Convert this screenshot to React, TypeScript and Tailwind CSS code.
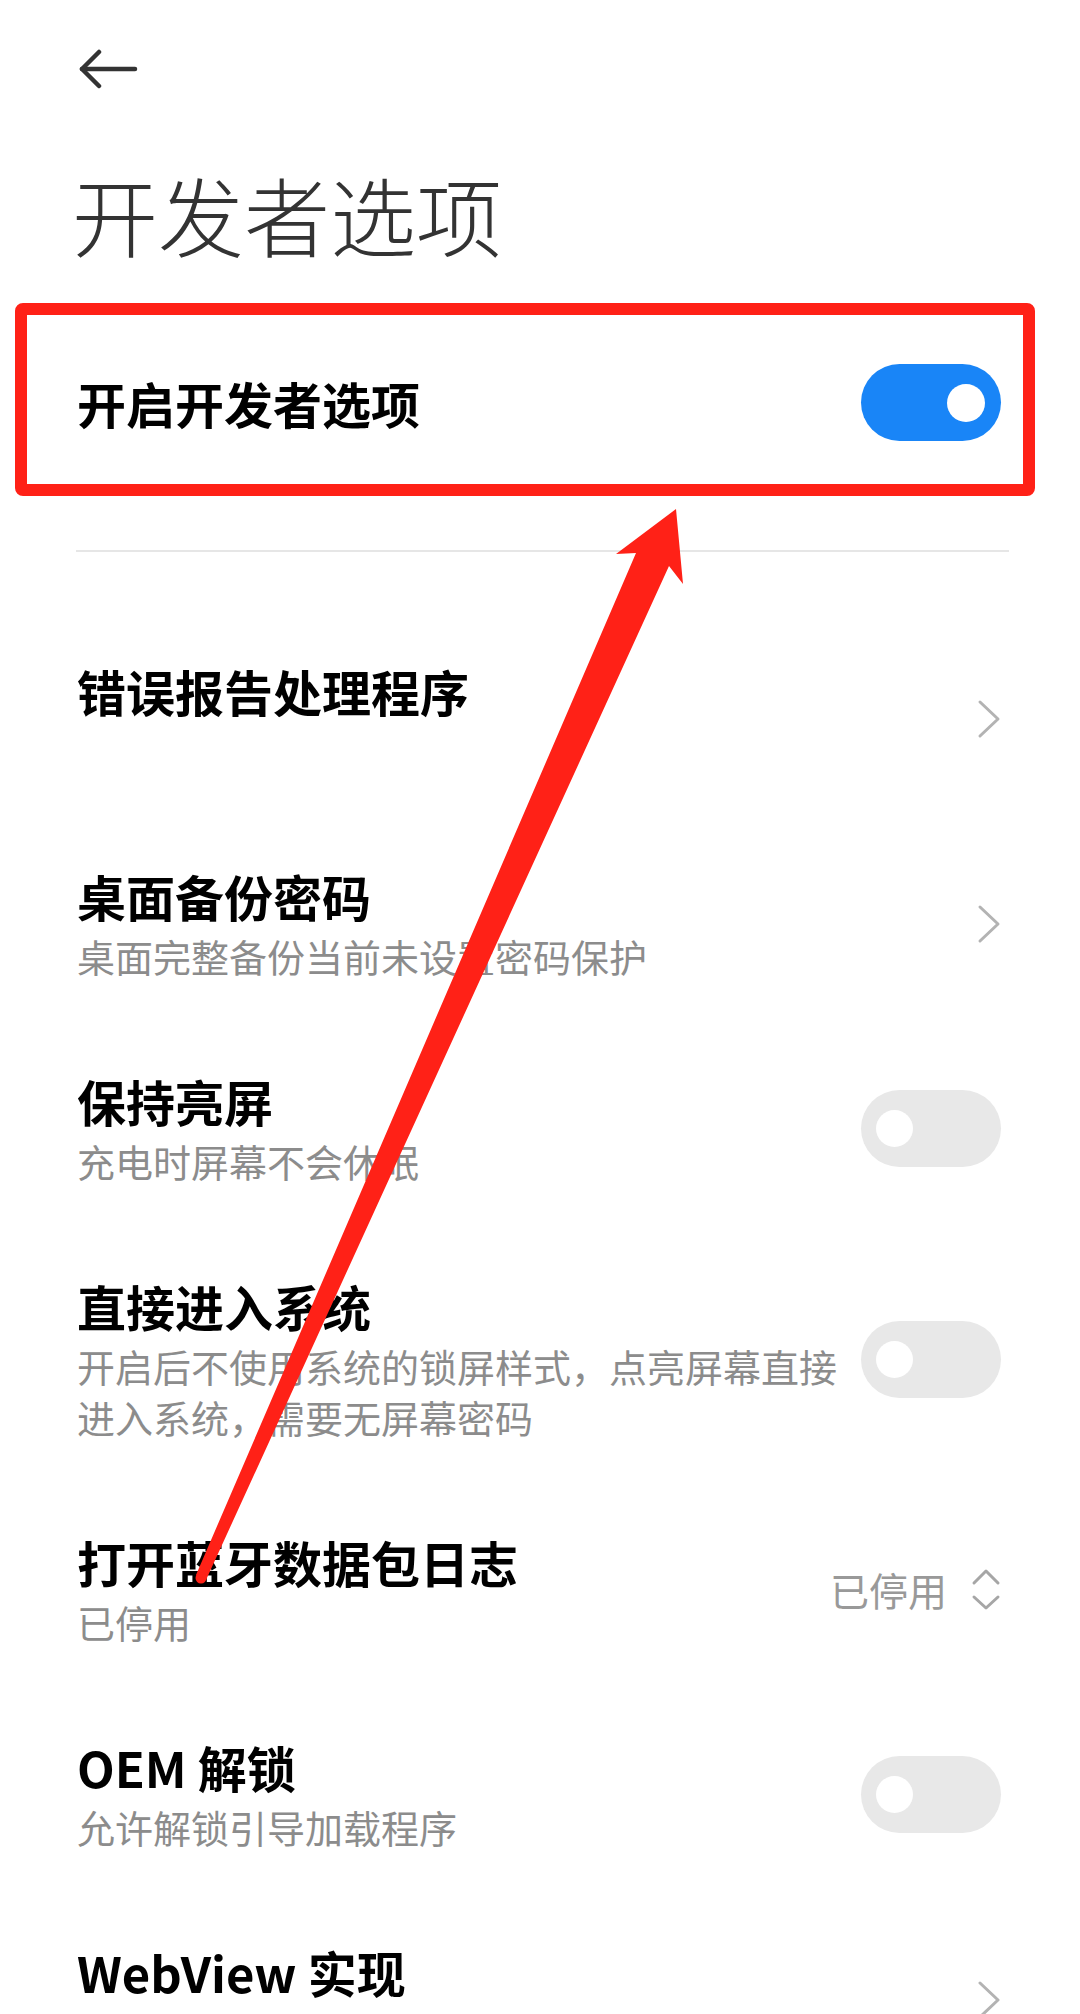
import type { ReactNode } from 'react'

function Toggle({ on }: { on?: boolean }) {
  return on ? (
    <div className="flex h-[77px] w-[140px] items-center justify-end rounded-full bg-[#1985f7] pr-[16px]">
      <div className="h-[38px] w-[38px] rounded-full bg-white" />
    </div>
  ) : (
    <div className="flex h-[77px] w-[140px] items-center rounded-full bg-[#e8e8e8] pl-[15px]">
      <div className="h-[37px] w-[37px] rounded-full bg-white" />
    </div>
  )
}

function Chevron() {
  return (
    <svg width="24" height="40" viewBox="0 0 24 40" className="block">
      <path d="M3 3 L21 20 L3 37" fill="none" stroke="#b3b3b3" strokeWidth="3" strokeLinecap="round" strokeLinejoin="round" />
    </svg>
  )
}

function UpDown() {
  return (
    <svg width="30" height="44" viewBox="0 0 30 44" className="block">
      <path d="M3 15 L15 3 L27 15" fill="none" stroke="#a6a6a6" strokeWidth="3" strokeLinecap="round" strokeLinejoin="round" />
      <path d="M3 29 L15 40 L27 29" fill="none" stroke="#a6a6a6" strokeWidth="3" strokeLinecap="round" strokeLinejoin="round" />
    </svg>
  )
}

function Item({ title, sub, right }: { title: string; sub: string; right: ReactNode }) {
  return (
    <div className="flex items-center py-[45px]">
      <div className="min-w-0 flex-1">
        <div className="text-[49px] leading-[60px] font-semibold text-black">{title}</div>
        <div className="mt-[4px] text-[38px] leading-[51px] text-[#8c8c8c]">{sub}</div>
      </div>
      <div className="ml-[14px] shrink-0">{right}</div>
    </div>
  )
}

export default function App() {
  return (
    <div className="relative h-[2014px] w-[1080px] overflow-hidden bg-white font-['Noto_Sans_CJK_SC','Noto_Sans',sans-serif]">
      <div className="pl-[77px] pr-[79px]">
        {/* header */}
        <div className="pt-[49px]">
          <svg width="62" height="40" viewBox="0 0 62 40" className="ml-[1px] block">
            <path d="M4 20 H57" stroke="#333" strokeWidth="4.5" strokeLinecap="round" />
            <path d="M21 3 L4 20 L21 37" fill="none" stroke="#333" strokeWidth="4.5" strokeLinecap="round" strokeLinejoin="round" />
          </svg>
        </div>
        <h1 className="-ml-[5px] mt-[82px] text-[86px] leading-[86px] font-light text-[#333]">开发者选项</h1>

        {/* master switch */}
        <div className="mt-[56px] flex items-center py-[51px]">
          <div className="flex-1 text-[49px] leading-[60px] font-semibold text-black">开启开发者选项</div>
          <Toggle on />
        </div>

        <div className="-ml-[1px] -mr-[8px] mt-[58px] h-[2px] bg-[#e6e6e6]" />

        {/* options */}
        <div className="mt-[64px]">
          <Item title="错误报告处理程序" sub={'\u00a0'} right={<Chevron />} />
          <Item title="桌面备份密码" sub="桌面完整备份当前未设置密码保护" right={<Chevron />} />
          <Item title="保持亮屏" sub="充电时屏幕不会休眠" right={<Toggle />} />
          <Item title="直接进入系统" sub="开启后不使用系统的锁屏样式，点亮屏幕直接进入系统，需要无屏幕密码" right={<Toggle />} />
          <Item
            title="打开蓝牙数据包日志"
            sub="已停用"
            right={
              <div className="flex items-center gap-[24px]">
                <span className="text-[39px] leading-[51px] text-[#999]">已停用</span>
                <UpDown />
              </div>
            }
          />
          <Item title="OEM 解锁" sub="允许解锁引导加载程序" right={<Toggle />} />
          <Item title="WebView 实现" sub={'\u00a0'} right={<Chevron />} />
        </div>
      </div>

      {/* annotation: red box + arrow */}
      <div className="pointer-events-none absolute left-[15px] top-[303px] h-[193px] w-[1020px] rounded-[8px] border-[12px] border-[#ff2117]" />
      <svg className="pointer-events-none absolute left-0 top-0" width="1080" height="2014" viewBox="0 0 1080 2014">
        <polygon points="676,509 683,584 669,566 206,1580 196,1575 636,553 616,554" fill="#ff2117" />
        <circle cx="201" cy="1578" r="5.5" fill="#ff2117" />
      </svg>
    </div>
  )
}
